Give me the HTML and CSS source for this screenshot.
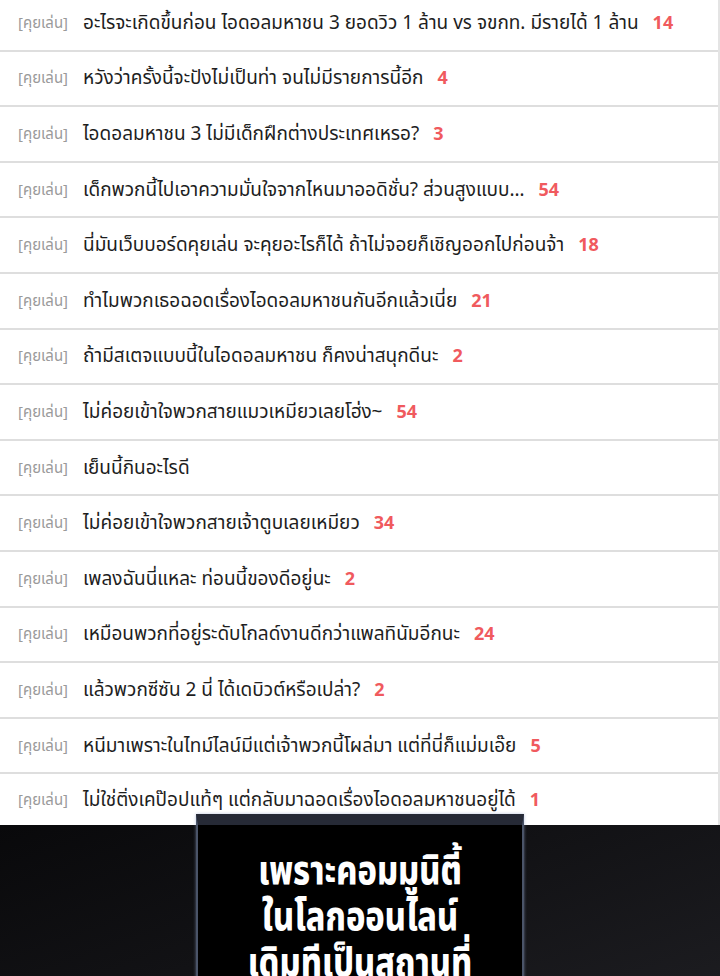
FILE: index.html
```html
<!DOCTYPE html>
<html lang="th">
<head>
  <meta charset="UTF-8">
  <title>คุยเล่น</title>
  <link rel="stylesheet" href="styles.css">
</head>
<body>
  <div class="board">
    <ul class="topics">
      <li class="topic"><span class="tag">[คุยเล่น]</span><span class="title">อะไรจะเกิดขึ้นก่อน ไอดอลมหาชน 3 ยอดวิว 1 ล้าน vs จขกท. มีรายได้ 1 ล้าน</span><span class="count">14</span></li>
      <li class="topic"><span class="tag">[คุยเล่น]</span><span class="title">หวังว่าครั้งนี้จะปังไม่เป็นท่า จนไม่มีรายการนี้อีก</span><span class="count">4</span></li>
      <li class="topic"><span class="tag">[คุยเล่น]</span><span class="title">ไอดอลมหาชน 3 ไม่มีเด็กฝึกต่างประเทศเหรอ?</span><span class="count">3</span></li>
      <li class="topic"><span class="tag">[คุยเล่น]</span><span class="title">เด็กพวกนี้ไปเอาความมั่นใจจากไหนมาออดิชั่น? ส่วนสูงแบบ…</span><span class="count">54</span></li>
      <li class="topic"><span class="tag">[คุยเล่น]</span><span class="title">นี่มันเว็บบอร์ดคุยเล่น จะคุยอะไรก็ได้ ถ้าไม่จอยก็เชิญออกไปก่อนจ้า</span><span class="count">18</span></li>
      <li class="topic"><span class="tag">[คุยเล่น]</span><span class="title">ทำไมพวกเธอฉอดเรื่องไอดอลมหาชนกันอีกแล้วเนี่ย</span><span class="count">21</span></li>
      <li class="topic"><span class="tag">[คุยเล่น]</span><span class="title">ถ้ามีสเตจแบบนี้ในไอดอลมหาชน ก็คงน่าสนุกดีนะ</span><span class="count">2</span></li>
      <li class="topic"><span class="tag">[คุยเล่น]</span><span class="title">ไม่ค่อยเข้าใจพวกสายแมวเหมียวเลยโฮ่ง~</span><span class="count">54</span></li>
      <li class="topic"><span class="tag">[คุยเล่น]</span><span class="title">เย็นนี้กินอะไรดี</span></li>
      <li class="topic"><span class="tag">[คุยเล่น]</span><span class="title">ไม่ค่อยเข้าใจพวกสายเจ้าตูบเลยเหมียว</span><span class="count">34</span></li>
      <li class="topic"><span class="tag">[คุยเล่น]</span><span class="title">เพลงฉันนี่แหละ ท่อนนี้ของดีอยู่นะ</span><span class="count">2</span></li>
      <li class="topic"><span class="tag">[คุยเล่น]</span><span class="title">เหมือนพวกที่อยู่ระดับโกลด์งานดีกว่าแพลทินัมอีกนะ</span><span class="count">24</span></li>
      <li class="topic"><span class="tag">[คุยเล่น]</span><span class="title">แล้วพวกซีซัน 2 นี่ ได้เดบิวต์หรือเปล่า?</span><span class="count">2</span></li>
      <li class="topic"><span class="tag">[คุยเล่น]</span><span class="title">หนีมาเพราะในไทม์ไลน์มีแต่เจ้าพวกนี้โผล่มา แต่ที่นี่ก็แม่มเอ๊ย</span><span class="count">5</span></li>
      <li class="topic"><span class="tag">[คุยเล่น]</span><span class="title">ไม่ใช่ติ่งเคป๊อปแท้ๆ แต่กลับมาฉอดเรื่องไอดอลมหาชนอยู่ได้</span><span class="count">1</span></li>
    </ul>
  </div>

  <div class="panel">
    <div class="caption">
      <p>เพราะคอมมูนิตี้<br>ในโลกออนไลน์<br>เดิมทีเป็นสถานที่</p>
    </div>
  </div>
</body>
</html>
```

FILE: styles.css
```css
body {
  margin: 0;
  background: #fff;
  font-family: 'Noto Sans Thai', 'Noto Sans', sans-serif;
  overflow: hidden;
}

.board {
  border-right: 2px solid #e4e4e4;
  margin-top: -4px;
}

.topics {
  list-style: none;
  margin: 0;
  padding: 0;
}

.topic {
  height: 55.6px;
  box-sizing: border-box;
  border-bottom: 2px solid #dedede;
  display: flex;
  align-items: center;
  padding-left: 18px;
  padding-top: 1px;
  white-space: nowrap;
}

.topic:last-child {
  border-bottom: none;
  height: 51px;
}

.tag {
  color: #9a9a9a;
  font-size: 15px;
  margin-right: 15px;
}

.title {
  color: #1e1e1e;
  font-size: 19px;
}

.count {
  color: #f05a5e;
  font-size: 18px;
  font-weight: bold;
  margin-left: 14px;
}

.panel {
  height: 160px;
  background: linear-gradient(160deg, #09090b 0%, #121215 50%, #1c1c20 100%);
  display: flex;
  justify-content: center;
}

.caption {
  width: 324px;
  margin-top: -11px;
  margin-left: -1px;
  background: #000;
  border: 2px solid #4a5468;
  border-top: 11px solid #262a36;
  box-shadow: 0 0 3px rgba(140, 160, 200, 0.6);
  text-align: center;
  overflow: hidden;
}

.caption p {
  margin: 24px 0 0;
  color: #fff;
  font-weight: 800;
  font-size: 40px;
  line-height: 46px;
  transform: scaleX(0.81);
}
```
